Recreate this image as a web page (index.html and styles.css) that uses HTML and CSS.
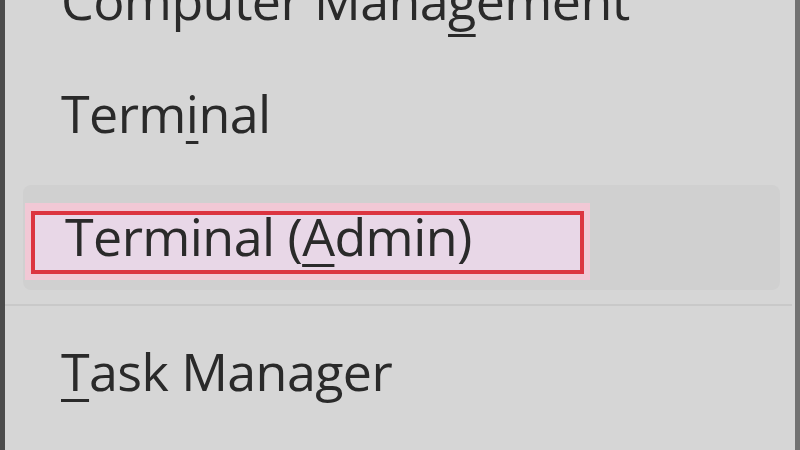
FILE: index.html
```html
<!DOCTYPE html>
<html>
<head>
<meta charset="utf-8">
<link rel="stylesheet" href="styles.css">
</head>
<body>
<div class="menu">
  <div class="item item-first"><span class="label">Computer Mana<u class="deep">g</u>ement</span></div>
  <div class="item item-second"><span class="label">Term<u>i</u>nal</span></div>
  <div class="hover-row">
    <span class="mark">
      <span class="frame"><span class="label">Terminal (<u>A</u>dmin)</span></span>
    </span>
  </div>
  <div class="divider"></div>
  <div class="item item-last"><span class="label"><u>T</u>ask Manager</span></div>
</div>
</body>
</html>
```
FILE: styles.css
```css
html, body {
  margin: 0;
  padding: 0;
  width: 800px;
  height: 450px;
  overflow: hidden;
  background: #d5d5d5;
}

.menu {
  box-sizing: border-box;
  width: 800px;
  height: 450px;
  border-left: 5px solid #4c4c4c;
  border-right: 5px solid #727272;
  background: #d6d6d6;
  font-family: "Open Sans", "Noto Sans", sans-serif;
  font-size: 52px;
  letter-spacing: -0.6px;
  color: #2a2a2a;
  overflow: hidden;
}

.label {
  display: block;
  line-height: 60px;
  filter: blur(0.6px);
}

u {
  text-decoration-thickness: 3px;
  text-underline-offset: 8px;
  text-decoration-skip-ink: none;
}

u.deep {
  text-underline-offset: 14px;
}

.item {
  display: flex;
  align-items: center;
  padding-left: 56px;
}

.item-first {
  height: 112px;
  margin-top: -56px;
}

.item-second {
  height: 114px;
}

.hover-row {
  box-sizing: border-box;
  height: 105px;
  margin: 15px 15px 0 18px;
  padding: 18px 0 0 2px;
  background: #d0d0d0;
  border-radius: 8px;
  display: flex;
  align-items: flex-start;
}

.mark {
  display: block;
  padding: 8px 6px 6px 6px;
  background: #f1c8d5;
}

.frame {
  box-sizing: border-box;
  display: block;
  width: 553px;
  height: 63px;
  border: 4px solid #dc3440;
  background: #e8d7e7;
  padding-left: 30px;
}

.frame .label {
  line-height: 55px;
  margin-top: -7px;
}

.divider {
  height: 2px;
  margin: 14px 3px 0 -5px;
  background: #c9c9c9;
}

.item-last {
  height: 130px;
}
```
